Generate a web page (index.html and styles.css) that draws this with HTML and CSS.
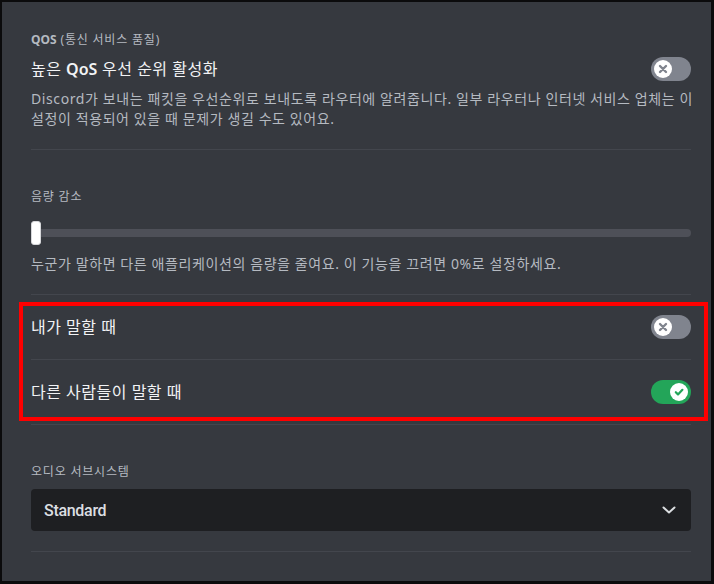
FILE: index.html
```html
<!DOCTYPE html>
<html lang="ko">
<head>
<meta charset="utf-8">
<title>음성 설정</title>
<link rel="stylesheet" href="styles.css">
</head>
<body>
<div class="frame">
  <section class="section qos">
    <div class="label"><span class="strong">QOS</span> (통신 서비스 품질)</div>
    <div class="row-head">
      <div class="title">높은 <span class="latin">QoS</span> 우선 순위 활성화</div>
      <div class="toggle off">
        <span class="knob">
          <svg viewBox="0 0 12 12" width="12" height="12"><path d="M3 3 L9 9 M9 3 L3 9" stroke="#80848e" stroke-width="2.4" stroke-linecap="round" fill="none"/></svg>
        </span>
      </div>
    </div>
    <p class="desc">Discord가 보내는 패킷을 우선순위로 보내도록 라우터에 알려줍니다. 일부 라우터나 인터넷 서비스 업체는 이<br>설정이 적용되어 있을 때 문제가 생길 수도 있어요.</p>
  </section>

  <section class="section ducking">
    <div class="label">음량 감소</div>
    <div class="slider">
      <div class="track"></div>
      <div class="handle"></div>
    </div>
    <p class="desc">누군가 말하면 다른 애플리케이션의 음량을 줄여요. 이 기능을 끄려면 0%로 설정하세요.</p>
  </section>

  <div class="highlight">
    <div class="toggle-row">
      <div class="title">내가 말할 때</div>
      <div class="toggle off">
        <span class="knob">
          <svg viewBox="0 0 12 12" width="12" height="12"><path d="M3 3 L9 9 M9 3 L3 9" stroke="#80848e" stroke-width="2.4" stroke-linecap="round" fill="none"/></svg>
        </span>
      </div>
    </div>
    <div class="toggle-row">
      <div class="title">다른 사람들이 말할 때</div>
      <div class="toggle on">
        <span class="knob">
          <svg viewBox="0 0 12 12" width="12" height="12"><path d="M2.8 6.2 L5 8.4 L9.4 3.8" stroke="#23a559" stroke-width="2.2" stroke-linecap="round" stroke-linejoin="round" fill="none"/></svg>
        </span>
      </div>
    </div>
  </div>

  <section class="section subsystem">
    <div class="label">오디오 서브시스템</div>
    <div class="select">
      <span class="select-value">Standard</span>
      <svg class="chevron" viewBox="0 0 14 8" width="14" height="8"><path d="M1.5 1.5 L7 6.5 L12.5 1.5" stroke="#dbdee1" stroke-width="2" stroke-linecap="round" stroke-linejoin="round" fill="none"/></svg>
    </div>
  </section>
</div>
</body>
</html>
```

FILE: styles.css
```css
html, body {
  margin: 0;
  padding: 0;
  background: #000;
}

body {
  width: 714px;
  height: 584px;
  overflow: hidden;
}

.frame {
  box-sizing: border-box;
  width: 714px;
  height: 584px;
  border-style: solid;
  border-color: #0b0b0c;
  border-width: 2px 3px 3px 2px;
  background: #36393f;
  padding: 0 20px 0 29px;
  font-family: "Noto Sans", "Noto Sans CJK KR", sans-serif;
  color: #b5bac1;
}

.section {
  border-bottom: 1px solid #43464d;
  padding-bottom: 20px;
}

.qos {
  padding-top: 30px;
}

.ducking {
  padding-top: 39px;
}

.subsystem {
  padding-top: 39px;
}

.label {
  font-size: 12px;
  line-height: 16px;
  color: #b5bac1;
  font-weight: 400;
  letter-spacing: 0.8px;
}

.label .strong {
  font-weight: 700;
  letter-spacing: 0;
}

.row-head {
  display: flex;
  align-items: center;
  justify-content: space-between;
  margin-top: 9px;
  height: 24px;
}

.title {
  font-size: 16px;
  line-height: 20px;
  color: #f2f3f5;
  font-weight: 400;
  letter-spacing: 0.5px;
}

.title .latin {
  font-weight: 600;
  letter-spacing: 0;
}

.desc {
  margin: 8px 0 0;
  font-size: 14px;
  line-height: 20px;
  color: #b5bac1;
  white-space: nowrap;
  letter-spacing: 0.6px;
}

.toggle {
  position: relative;
  width: 40px;
  height: 24px;
  border-radius: 12px;
  flex: none;
}

.toggle.off {
  background: #80848e;
}

.toggle.on {
  background: #23a559;
}

.knob {
  position: absolute;
  top: 3px;
  width: 18px;
  height: 18px;
  border-radius: 50%;
  background: #fff;
  display: flex;
  align-items: center;
  justify-content: center;
}

.toggle.off .knob {
  left: 3px;
}

.toggle.on .knob {
  right: 3px;
}

.slider {
  position: relative;
  height: 24px;
  margin-top: 16px;
  display: flex;
  align-items: center;
}

.track {
  flex: 1;
  height: 8px;
  border-radius: 4px;
  background: #4e5058;
}

.handle {
  position: absolute;
  left: 0;
  top: 0;
  box-sizing: border-box;
  width: 10px;
  height: 24px;
  border-radius: 3px;
  background: #fff;
  border: 1px solid #d6d7da;
}

.ducking .desc {
  margin-top: 9px;
}

.highlight {
  position: relative;
}

.highlight::before {
  content: "";
  position: absolute;
  top: 7px;
  bottom: 4px;
  left: -12px;
  right: -17px;
  border: 4px solid #f00;
  pointer-events: none;
}

.toggle-row {
  display: flex;
  align-items: center;
  justify-content: space-between;
  padding: 20px 0;
  border-bottom: 1px solid #43464d;
}

.toggle-row .title {
  line-height: 24px;
}

.select {
  margin-top: 9px;
  height: 42px;
  box-sizing: border-box;
  background: #1e1f22;
  border-radius: 4px;
  display: flex;
  align-items: center;
  justify-content: space-between;
  padding: 0 15px 0 13px;
}

.select-value {
  font-family: Roboto, "Noto Sans", sans-serif;
  font-size: 16px;
  font-weight: 500;
  letter-spacing: -0.3px;
  color: #dbdee1;
}
```
